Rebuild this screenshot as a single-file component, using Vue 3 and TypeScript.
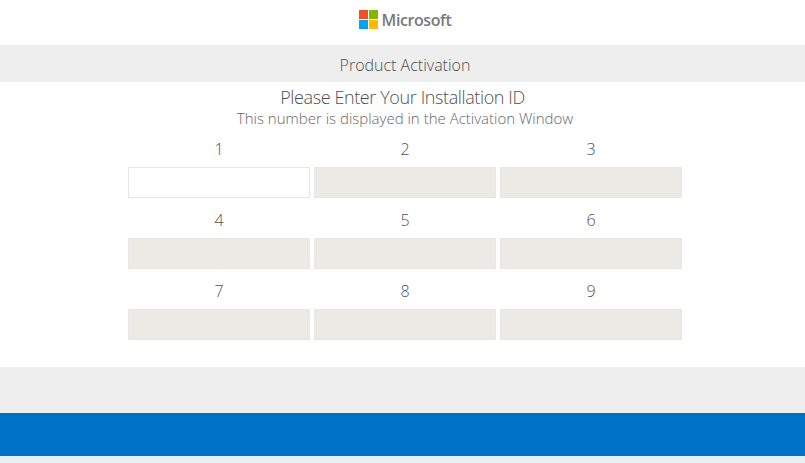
<script setup lang="ts">
const fields: number[] = [1, 2, 3, 4, 5, 6, 7, 8, 9]
</script>

<template>
  <div class="viewport">
    <div class="page">
      <header class="logo">
        <svg class="mark" width="19" height="19" viewBox="0 0 20 20" aria-hidden="true">
          <rect x="0" y="0" width="9.5" height="9.5" fill="#f25022" />
          <rect x="10.5" y="0" width="9.5" height="9.5" fill="#7fba00" />
          <rect x="0" y="10.5" width="9.5" height="9.5" fill="#00a4ef" />
          <rect x="10.5" y="10.5" width="9.5" height="9.5" fill="#ffb900" />
        </svg>
        <span class="brand">Microsoft</span>
      </header>
      <div class="band">Product Activation</div>
      <main class="content">
        <h1 class="title">Please Enter Your Installation ID</h1>
        <p class="sub">This number is displayed in the Activation Window</p>
        <div class="grid">
          <label v-for="n in fields" :key="n" class="field">
            <span class="num">{{ n }}</span>
            <input class="box" :class="{ active: n === 1 }" :disabled="n !== 1" type="text" />
          </label>
        </div>
      </main>
      <div class="gray"></div>
      <div class="blue"></div>
      <div class="tail"></div>
    </div>
  </div>
</template>

<style scoped>
.viewport {
  width: 805px;
  height: 463px;
  overflow: hidden;
}
.page {
  width: 810px;
  height: 463px;
  background: #fff;
  font-family: "Open Sans", "Noto Sans", sans-serif;
  font-weight: 300;
  color: #505050;
}
.logo {
  height: 45px;
  display: flex;
  align-items: flex-start;
  justify-content: center;
  padding-top: 10px;
  box-sizing: border-box;
  gap: 4px;
}
.mark { flex: none; }
.brand {
  font-size: 16px;
  line-height: 20px;
  font-weight: 600;
  color: #7a7a7a;
  letter-spacing: -0.4px;
}
.band {
  height: 37px;
  background: #eeeeee;
  text-align: center;
  font-size: 16px;
  line-height: 41px;
}
.content {
  height: 285px;
  box-sizing: border-box;
  padding-top: 3px;
  text-align: center;
}
.title {
  margin: 0;
  padding-right: 5px;
  font-size: 18px;
  font-weight: 300;
  line-height: 24px;
  letter-spacing: -0.39px;
}
.sub {
  margin: 0;
  font-size: 15px;
  line-height: 18px;
  color: #666;
}
.grid {
  display: grid;
  grid-template-columns: repeat(3, 182px);
  column-gap: 4px;
  row-gap: 9px;
  justify-content: center;
  margin-top: 9px;
}
.field { display: block; }
.num {
  display: block;
  height: 31px;
  font-size: 16px;
  line-height: 24px;
  padding-top: 1px;
  box-sizing: border-box;
}
.box {
  display: block;
  width: 182px;
  height: 31px;
  margin: 0;
  box-sizing: border-box;
  border: 1px solid #e6e6e6;
  background: #ebeae5;
  outline: none;
  padding: 0;
}
.box.active { background: #fff; }
.gray { height: 46px; background: #eeeeee; }
.blue { height: 43px; background: #0072c6; }
.tail { height: 7px; background: #e6f0f6; }
</style>
